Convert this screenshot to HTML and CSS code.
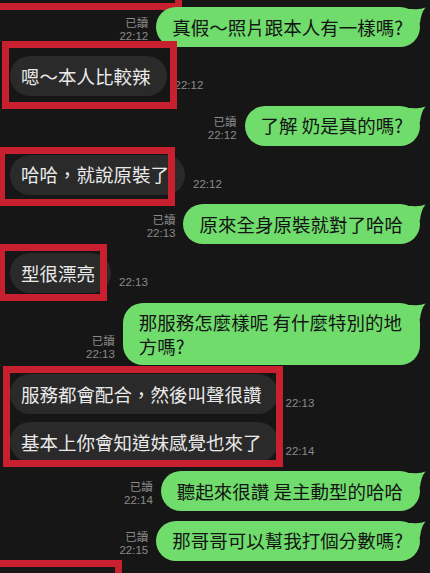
FILE: index.html
```html
<!DOCTYPE html>
<html lang="zh-Hant">
<head>
<meta charset="utf-8">
<title>Chat</title>
<link rel="stylesheet" href="styles.css">
</head>
<body>
<div class="chat">
  <div class="stub stub-top"></div>

  <div class="row sent">
    <div class="meta"><span>已讀</span><span>22:12</span></div>
    <div class="bubble green">真假～照片跟本人有一樣嗎?<svg class="tail" viewBox="0 0 18 24"><path d="M0 2 L4 2 Q12 3 17.5 0.5 Q13 6 12 16 L0 16 Z"/></svg></div>
  </div>

  <div class="row recv mark mark-a">
    <div class="bubble dark">嗯～本人比較辣</div>
    <div class="time">22:12</div>
  </div>

  <div class="row sent">
    <div class="meta"><span>已讀</span><span>22:12</span></div>
    <div class="bubble green">了解 奶是真的嗎?<svg class="tail" viewBox="0 0 18 24"><path d="M0 2 L4 2 Q12 3 17.5 0.5 Q13 6 12 16 L0 16 Z"/></svg></div>
  </div>

  <div class="row recv mark mark-b">
    <div class="bubble dark">哈哈，就說原裝了</div>
    <div class="time">22:12</div>
  </div>

  <div class="row sent">
    <div class="meta"><span>已讀</span><span>22:13</span></div>
    <div class="bubble green">原來全身原裝就對了哈哈<svg class="tail" viewBox="0 0 18 24"><path d="M0 2 L4 2 Q12 3 17.5 0.5 Q13 6 12 16 L0 16 Z"/></svg></div>
  </div>

  <div class="row recv mark mark-c">
    <div class="bubble dark">型很漂亮</div>
    <div class="time">22:13</div>
  </div>

  <div class="row sent">
    <div class="meta"><span>已讀</span><span>22:13</span></div>
    <div class="bubble green multi"><span class="line">那服務怎麼樣呢 有什麼特別的地</span><span class="line">方嗎?</span><svg class="tail" viewBox="0 0 18 24"><path d="M0 2 L4 2 Q12 3 17.5 0.5 Q13 6 12 16 L0 16 Z"/></svg></div>
  </div>

  <div class="group mark mark-d">
    <div class="row recv">
      <div class="bubble dark">服務都會配合，然後叫聲很讚</div>
      <div class="time">22:13</div>
    </div>
    <div class="row recv">
      <div class="bubble dark">基本上你會知道妹感覺也來了</div>
      <div class="time">22:14</div>
    </div>
  </div>

  <div class="row sent">
    <div class="meta"><span>已讀</span><span>22:14</span></div>
    <div class="bubble green">聽起來很讚 是主動型的哈哈<svg class="tail" viewBox="0 0 18 24"><path d="M0 2 L4 2 Q12 3 17.5 0.5 Q13 6 12 16 L0 16 Z"/></svg></div>
  </div>

  <div class="row sent">
    <div class="meta"><span>已讀</span><span>22:15</span></div>
    <div class="bubble green">那哥哥可以幫我打個分數嗎?<svg class="tail" viewBox="0 0 18 24"><path d="M0 2 L4 2 Q12 3 17.5 0.5 Q13 6 12 16 L0 16 Z"/></svg></div>
  </div>

  <div class="stub stub-bottom"></div>
</div>
</body>
</html>
```

FILE: styles.css
```css
html, body {
  margin: 0;
  padding: 0;
  background: #161616;
  height: 573px;
  overflow: hidden;
}

.chat {
  position: relative;
  display: flex;
  flex-direction: column;
  gap: 9.3px;
  padding: 7px 10px 0 10px;
  font-family: "Noto Sans CJK TC", "Noto Sans CJK SC", sans-serif;
}

.row {
  display: flex;
  align-items: flex-end;
}

.row.sent {
  justify-content: flex-end;
}

.row.recv {
  justify-content: flex-start;
}

.group {
  display: flex;
  flex-direction: column;
  gap: 8px;
}

.bubble {
  position: relative;
  font-size: 18.5px;
  line-height: 23px;
  padding: 8.5px 17px 8.5px 16px;
  border-radius: 20px;
  white-space: nowrap;
}

.bubble.green {
  background: #6fdc6c;
  color: #141414;
}

.bubble.multi {
  display: flex;
  flex-direction: column;
  padding: 7px 18px 7px 16px;
  border-radius: 20px;
}

.line {
  display: block;
  height: 24px;
  line-height: 24px;
}

.bubble.dark {
  background: #2a2a2a;
  color: #e9e9e9;
  padding: 8.5px 16px 8.5px 11px;
}

.tail {
  position: absolute;
  right: -6px;
  top: 0;
  width: 18px;
  height: 24px;
  overflow: visible;
  fill: #6fdc6c;
}

.meta {
  display: flex;
  flex-direction: column;
  align-items: flex-end;
  margin-right: 8px;
  padding-bottom: 4px;
  font-family: "Liberation Sans", "Noto Sans CJK TC", sans-serif;
  font-size: 11.5px;
  line-height: 13px;
  color: #8a8a8a;
}

.time {
  margin-left: 8px;
  padding-bottom: 4px;
  font-family: "Liberation Sans", sans-serif;
  font-size: 11.5px;
  line-height: 13px;
  color: #8a8a8a;
}

/* red annotation boxes drawn over the chat */
.mark {
  position: relative;
}

.mark::after {
  content: "";
  position: absolute;
  border: 7px solid #c8202e;
  box-sizing: border-box;
  pointer-events: none;
}

.mark-a::after { left: -8px;  top: -15px; width: 175px; height: 68px; }
.mark-b::after { left: -12px; top: -8px;  width: 177px; height: 59px; }
.mark-c::after { left: -12px; top: -9px;  width: 109px; height: 57px; }
.mark-d::after { left: -7px;  top: -8px;  width: 280px; height: 101px; }

.stub {
  box-sizing: border-box;
  border: 0 solid #c8202e;
}

.stub-top {
  position: absolute;
  left: 0;
  top: 0;
  width: 182px;
  height: 10px;
  border-right-width: 7px;
  border-bottom-width: 7px;
}

.stub-bottom {
  margin-left: -10px;
  margin-top: -10px;
  width: 122px;
  height: 40px;
  border-top-width: 7px;
  border-right-width: 7px;
}
```
